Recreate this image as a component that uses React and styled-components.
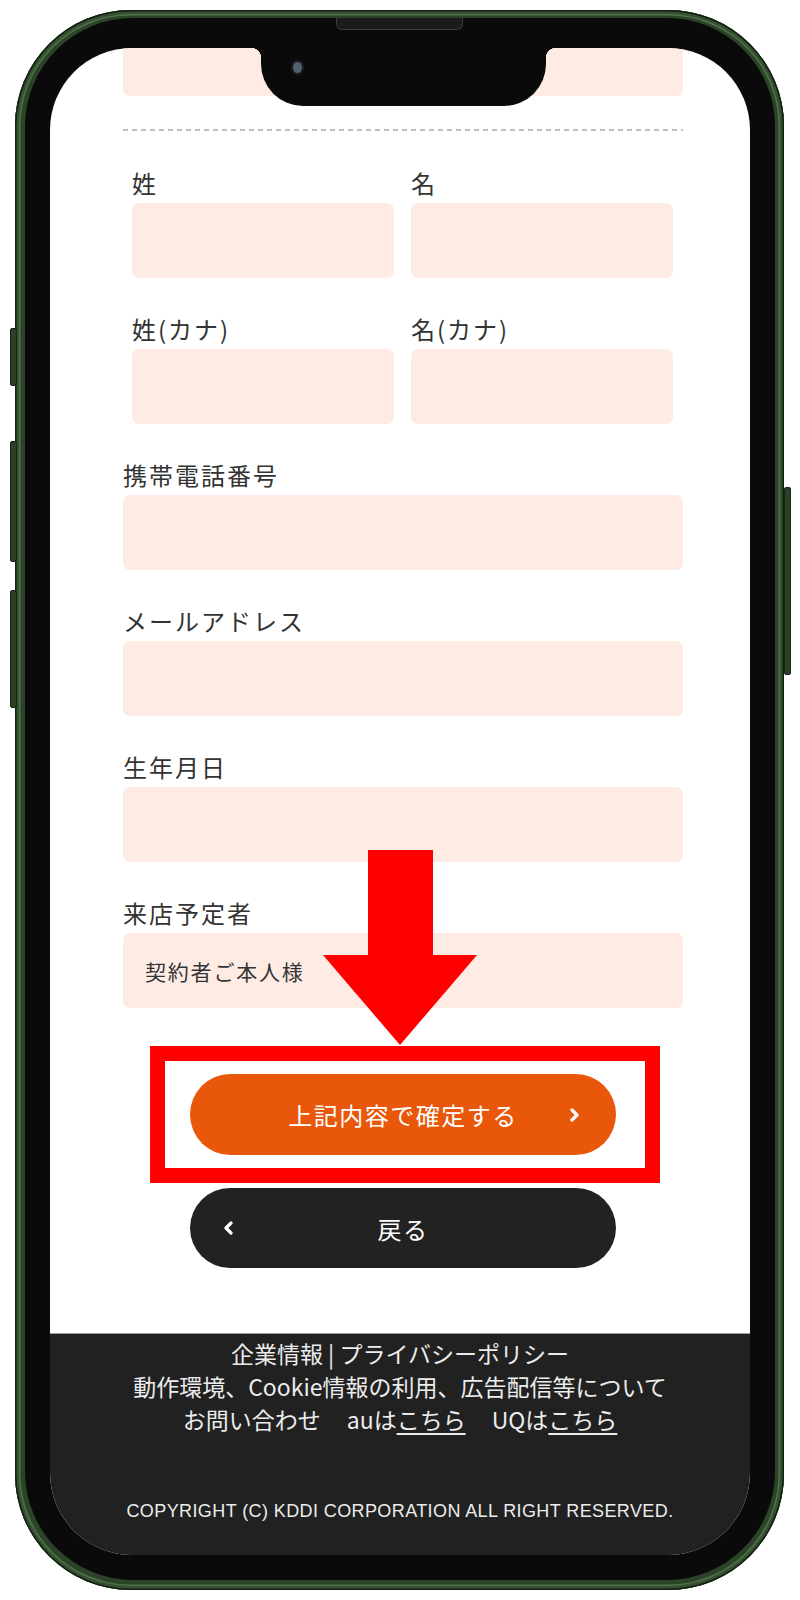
import React from "react";
import styled, { createGlobalStyle } from "styled-components";

const GlobalStyle = createGlobalStyle`
  html, body {
    margin: 0;
    padding: 0;
    background: #fff;
  }
  body {
    font-family: "Noto Sans CJK JP", "Noto Sans", sans-serif;
  }
`;

const Stage = styled.div`
  width: 800px;
  height: 1600px;
  padding: 10px 0 0 15px;
  box-sizing: border-box;
  overflow: hidden;
`;

const Frame = styled.div`
  position: relative;
  width: 769px;
  height: 1580px;
  box-sizing: border-box;
  padding: 8px 9px 10px 10px;
  border-radius: 116px;
  background: #2b4428;
  box-shadow: inset 0 0 0 1.5px #142016, inset 0 0 0 4px #35512f,
    inset 0 0 0 5.5px #51704c;
`;

const SideButton = styled.div`
  position: absolute;
  top: ${(p) => p.$top}px;
  height: ${(p) => p.$height}px;
  ${(p) => (p.$right ? "right: -7px;" : "left: -5px;")}
  width: 7px;
  border-radius: 3px;
  background: #2a4126;
  box-shadow: inset 0 0 0 1px #162317;
`;

const Bezel = styled.div`
  position: relative;
  height: 100%;
  box-sizing: border-box;
  padding: 30px 25px 25px 25px;
  border-radius: 108px;
  background: #0a0a0a;
`;

const Speaker = styled.div`
  position: absolute;
  top: 0;
  left: 311px;
  width: 127px;
  height: 12px;
  box-sizing: border-box;
  border: 1px solid #3a3a3a;
  border-top: none;
  border-radius: 0 0 6px 6px;
  background: #1b1b1b;
  z-index: 3;
`;

const Notch = styled.div`
  position: absolute;
  top: 0;
  left: 236px;
  width: 285px;
  height: 88px;
  border-radius: 0 0 42px 42px;
  background: #0a0a0a;
  z-index: 2;

  &::before,
  &::after {
    content: "";
    position: absolute;
    top: 30px;
    width: 10px;
    height: 10px;
  }
  &::before {
    left: -10px;
    background: radial-gradient(circle at 0 100%, transparent 10px, #0a0a0a 10.5px);
  }
  &::after {
    right: -10px;
    background: radial-gradient(circle at 100% 100%, transparent 10px, #0a0a0a 10.5px);
  }
`;

const Camera = styled.div`
  position: absolute;
  left: 32px;
  top: 44px;
  width: 9px;
  height: 11px;
  border-radius: 50%;
  background: #52606f;
  box-shadow: 0 0 0 2px #1a1d22;
`;

const Screen = styled.div`
  position: relative;
  height: 100%;
  border-radius: 82px;
  overflow: hidden;
  background: #fff;
  display: flex;
  flex-direction: column;
`;

const Content = styled.div`
  display: flex;
  flex-direction: column;
  padding: 0 67px 0 73px;
`;

const InputBox = styled.div`
  height: 75px;
  box-sizing: border-box;
  border-radius: 7px;
  background: #fdebe4;
  display: flex;
  align-items: center;
  padding-left: 22px;
  font-size: 21px;
  letter-spacing: 1.8px;
  color: #333;
`;

const ClippedInput = styled(InputBox)`
  margin-top: -27px;
`;

const Divider = styled.div`
  margin-top: 33px;
  height: 2px;
  background: repeating-linear-gradient(to right, #bdbdbd 0 5px, transparent 5px 9px);
`;

const Form = styled.div`
  margin-top: 37px;
  display: flex;
  flex-direction: column;
  gap: 36px;
`;

const Row = styled.div`
  display: grid;
  grid-template-columns: 1fr 1fr;
  gap: 17px;
  padding: 0 10px 0 9px;
`;

const Field = styled.div`
  display: flex;
  flex-direction: column;
`;

const Label = styled.div`
  font-size: 24px;
  line-height: 30px;
  margin-bottom: 5px;
  letter-spacing: 2px;
  color: #333;
`;

const Highlight = styled.div`
  margin: 38px 0 0 27px;
  width: 510px;
  box-sizing: border-box;
  border: 15px solid #ff0000;
  padding: 13px 30px 13px 25px;
`;

const PillButton = styled.div`
  width: 426px;
  height: ${(p) => (p.$primary ? 81 : 80)}px;
  box-sizing: border-box;
  border-radius: 41px;
  background: ${(p) => (p.$primary ? "#e9570b" : "#222222")};
  color: #fff;
  font-size: 24px;
  letter-spacing: 1.5px;
  display: grid;
  grid-template-columns: 1fr auto 1fr;
  align-items: center;
  padding: ${(p) => (p.$primary ? "0 36px" : "0 33px")};
`;

const BackButton = styled(PillButton)`
  margin: 5px 0 0 67px;
`;

const ChevronSlot = styled.span`
  display: flex;
  justify-content: ${(p) => (p.$end ? "flex-end" : "flex-start")};
`;

const Arrow = styled.svg`
  position: absolute;
  left: 273px;
  top: 802px;
  z-index: 1;
`;

const Footer = styled.footer`
  margin-top: auto;
  height: 222px;
  box-sizing: border-box;
  border-top: 1px solid #9a9a9a;
  background: #212121;
  padding-top: 3px;
  text-align: center;
  color: #ececec;
`;

const FooterLine = styled.div`
  font-size: 23px;
  line-height: 33px;
  white-space: nowrap;
`;

const Gap = styled.span`
  margin-left: 26px;
`;

const Link = styled.span`
  text-decoration: underline;
  text-underline-offset: 4px;
`;

const Copyright = styled.div`
  margin-top: 65px;
  font-family: "Liberation Sans", Arial, sans-serif;
  font-size: 18px;
  line-height: 20px;
  letter-spacing: 0.4px;
`;

function Chevron({ dir }) {
  const pts = dir === "left" ? "8,2 3,7 8,12" : "3,2 8,7 3,12";
  return (
    <svg width="11" height="14" viewBox="0 0 11 14">
      <polyline
        points={pts}
        fill="none"
        stroke="#fff"
        strokeWidth="3.2"
        strokeLinecap="round"
        strokeLinejoin="round"
      />
    </svg>
  );
}

function FormField({ label, value }) {
  return (
    <Field>
      <Label>{label}</Label>
      <InputBox>{value}</InputBox>
    </Field>
  );
}

export default function App() {
  return (
    <Stage>
      <GlobalStyle />
      <Frame>
        <SideButton $top={318} $height={58} />
        <SideButton $top={431} $height={121} />
        <SideButton $top={580} $height={118} />
        <SideButton $right $top={477} $height={188} />
        <Bezel>
          <Speaker />
          <Notch>
            <Camera />
          </Notch>
          <Screen>
            <Content>
              <ClippedInput />
              <Divider />
              <Form>
                <Row>
                  <FormField label="姓" />
                  <FormField label="名" />
                </Row>
                <Row>
                  <FormField label="姓(カナ)" />
                  <FormField label="名(カナ)" />
                </Row>
                <FormField label="携帯電話番号" />
                <FormField label="メールアドレス" />
                <FormField label="生年月日" />
                <FormField label="来店予定者" value="契約者ご本人様" />
              </Form>
              <Highlight>
                <PillButton $primary>
                  <span />
                  <span>上記内容で確定する</span>
                  <ChevronSlot $end>
                    <Chevron dir="right" />
                  </ChevronSlot>
                </PillButton>
              </Highlight>
              <BackButton>
                <ChevronSlot>
                  <Chevron dir="left" />
                </ChevronSlot>
                <span>戻る</span>
                <span />
              </BackButton>
            </Content>
            <Arrow width="154" height="196" viewBox="0 0 154 196">
              <polygon
                points="45,0 110,0 110,105 154,105 77,195 0,105 45,105"
                fill="#ff0000"
              />
            </Arrow>
            <Footer>
              <FooterLine>企業情報 | プライバシーポリシー</FooterLine>
              <FooterLine>動作環境、Cookie情報の利用、広告配信等について</FooterLine>
              <FooterLine>
                お問い合わせ
                <Gap>au</Gap>は<Link>こちら</Link>
                <Gap>UQ</Gap>は<Link>こちら</Link>
              </FooterLine>
              <Copyright>COPYRIGHT (C) KDDI CORPORATION ALL RIGHT RESERVED.</Copyright>
            </Footer>
          </Screen>
        </Bezel>
      </Frame>
    </Stage>
  );
}
